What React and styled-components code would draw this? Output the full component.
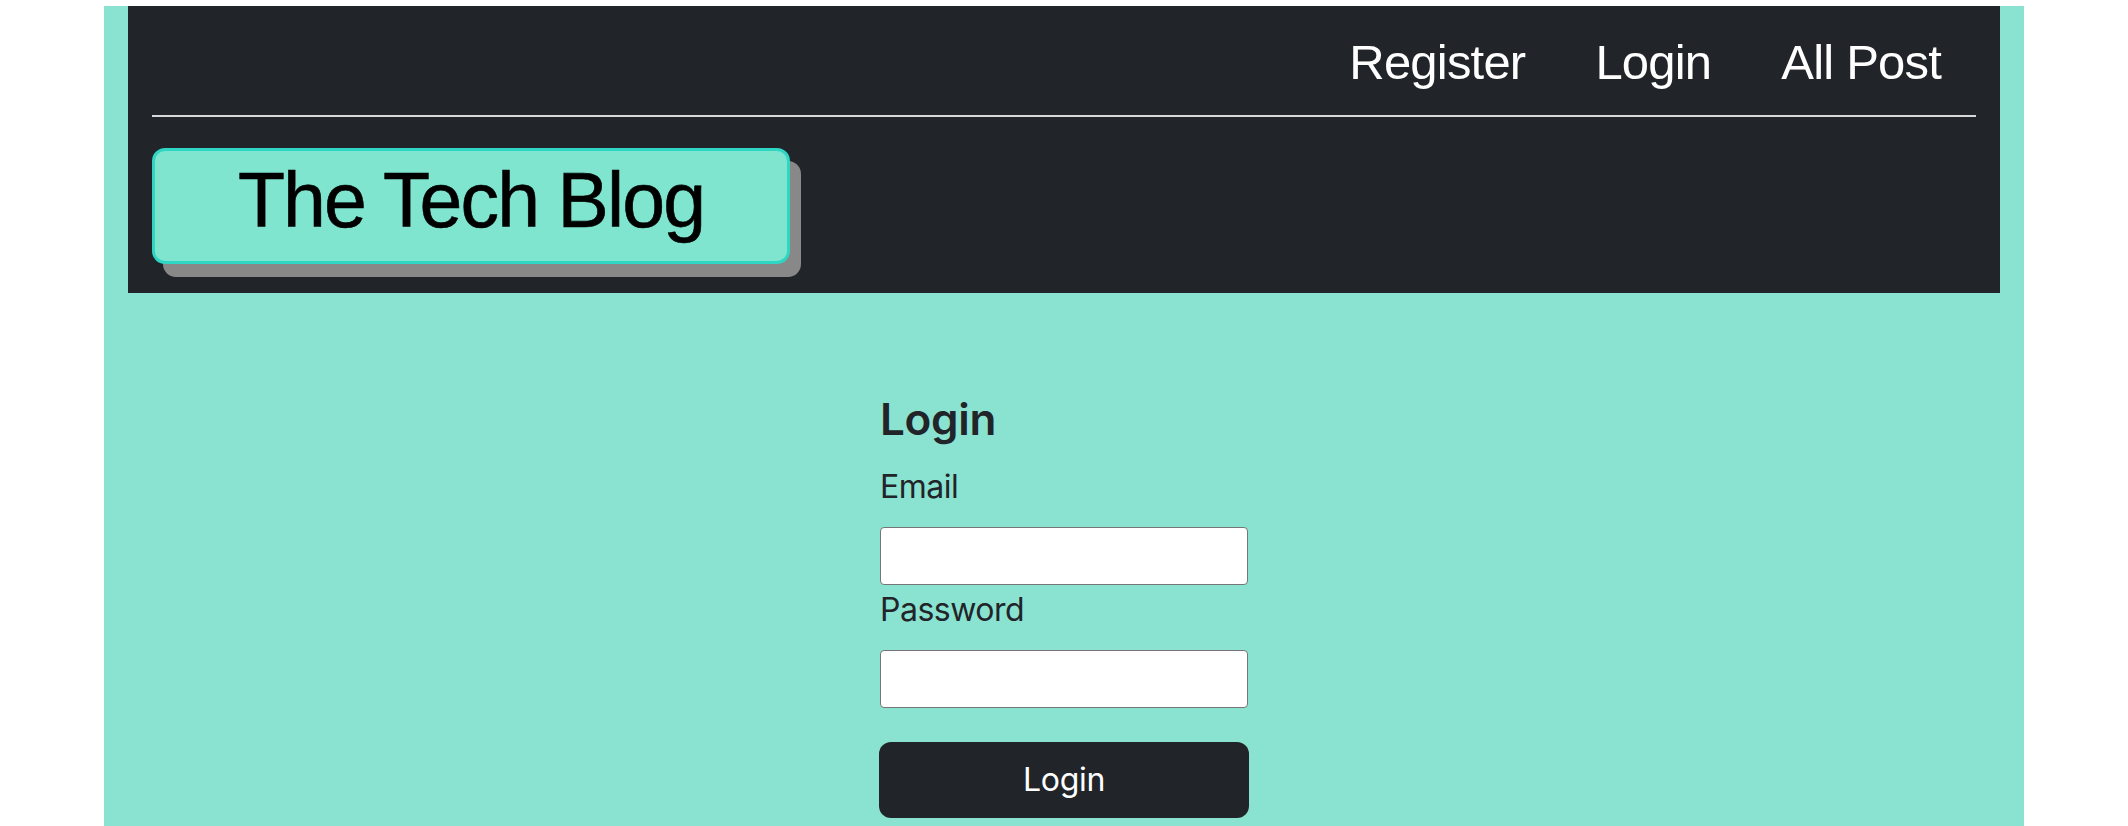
import styled, { createGlobalStyle } from 'styled-components';

const GlobalStyle = createGlobalStyle`
  html, body {
    margin: 0;
    padding: 0;
    background: #ffffff;
    overflow: hidden;
  }
  * { box-sizing: border-box; }
`

const Page = styled.div`
  padding-top: 6px;
`
const Container = styled.div`
  width: 1920px;
  min-height: calc(100vh - 6px);
  margin: 0 auto;
  background-color: #8ae2d0;
  padding: 0 24px;
`
const Header = styled.header`
  background-color: #212529;
  padding: 28px 24px 29px;
`
const Nav = styled.nav`
  display: flex;
  justify-content: flex-end;
  padding-bottom: 25px;
  border-bottom: 2px solid #d6d8da;
`
const NavLink = styled.a`
  color: #ffffff;
  text-decoration: none;
  font-family: "Liberation Sans", Arial, sans-serif;
  font-size: 49px;
  line-height: 56px;
  letter-spacing: -0.8px;
  padding: 0 35px;
`
const Logo = styled.h1`
  display: inline-block;
  width: 638px;
  margin: 31px 0 0;
  padding: 11px 0 22px;
  text-align: center;
  background-color: #7fe5cf;
  border: 3px solid #2ed6c3;
  border-radius: 13px;
  box-shadow: 11px 13px 0 #888888;
  font-family: "Liberation Sans", Arial, sans-serif;
  font-weight: 400;
  font-size: 77px;
  line-height: 77px;
  letter-spacing: -1.9px;
  -webkit-text-stroke: 0.6px #000000;
  color: #000000;
`
const Main = styled.main`
  display: flex;
  justify-content: center;
  padding-top: 100px;
`
const Form = styled.form`
  width: 370px;
  display: flex;
  flex-direction: column;
  align-items: flex-start;
  font-family: Inter, "Noto Sans", sans-serif;
  color: #212529;
`
const Title = styled.h3`
  margin: 0 0 17px 1px;
  font-size: 44px;
  font-weight: 600;
  line-height: 52.8px;
  letter-spacing: -0.3px;
`
const Label = styled.label`
  margin: 0 0 16px 1px;
  font-size: 32px;
  line-height: 48px;
  letter-spacing: -0.5px;
`
const Input = styled.input`
  width: 368px;
  height: 58px;
  margin: 0 0 1px 1px;
  background: #ffffff;
  border: 1.5px solid #767676;
  border-radius: 4px;
  font-size: 28px;
  padding: 0 8px;
`
const Button = styled.button`
  width: 370px;
  height: 76px;
  margin-top: 33px;
  background-color: #212529;
  color: #ffffff;
  border: none;
  border-radius: 12px;
  font-family: Inter, "Noto Sans", sans-serif;
  font-size: 32px;
  line-height: 48px;
  letter-spacing: -0.3px;
  cursor: pointer;
`

export default function App() {
  return (
    <Page>
      <GlobalStyle />
      <Container>
        <Header>
          <Nav>
            <NavLink href="#">Register</NavLink>
            <NavLink href="#">Login</NavLink>
            <NavLink href="#">All Post</NavLink>
          </Nav>
          <Logo>The Tech Blog</Logo>
        </Header>
        <Main>
          <Form onSubmit={e => e.preventDefault()}>
            <Title>Login</Title>
            <Label htmlFor="email">Email</Label>
            <Input id="email" type="email" />
            <Label htmlFor="password">Password</Label>
            <Input id="password" type="password" />
            <Button type="submit">Login</Button>
          </Form>
        </Main>
      </Container>
    </Page>
  );
}
